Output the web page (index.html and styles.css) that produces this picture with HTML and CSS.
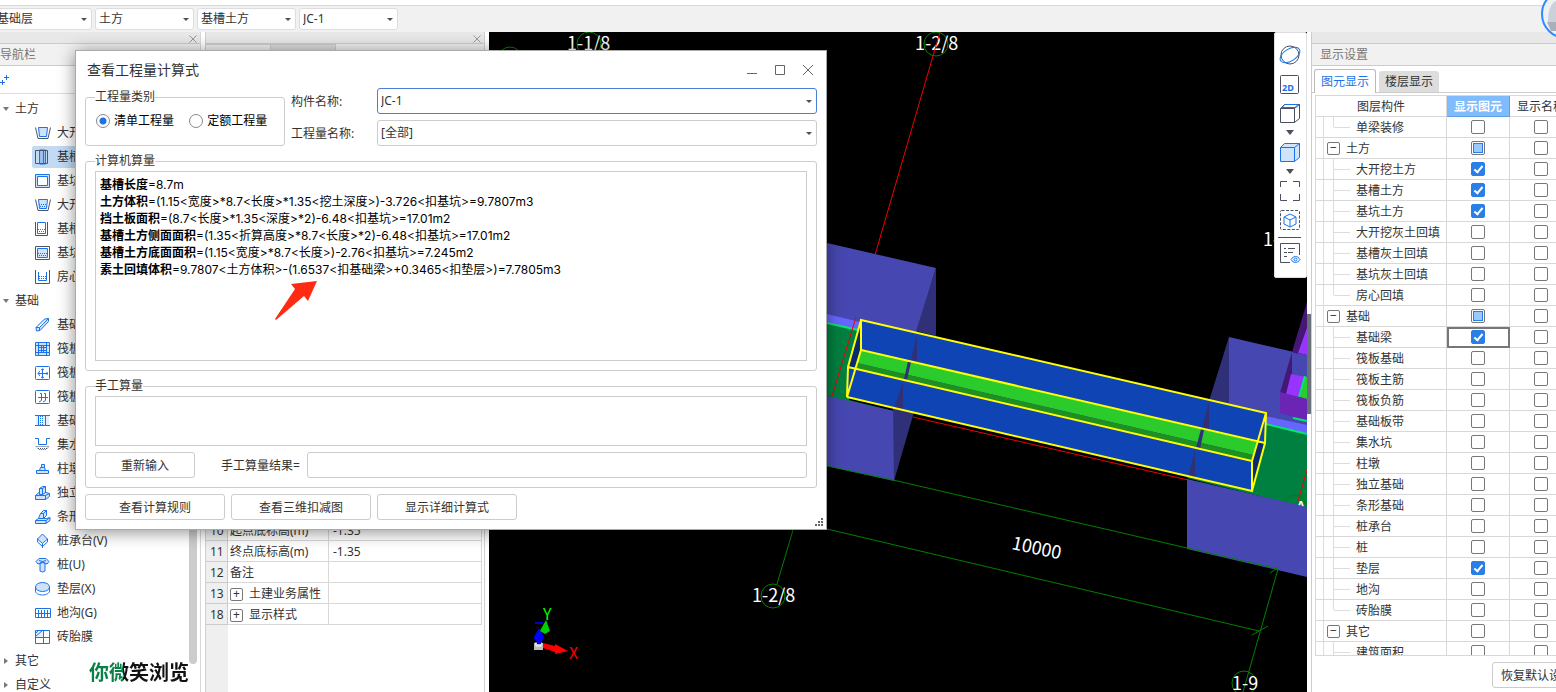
FILE: index.html
```html
<!DOCTYPE html>
<html lang="zh-CN">
<head>
<meta charset="UTF-8">
<meta name="viewport" content="width=device-width, initial-scale=1.0">
<title>查看工程量计算式</title>
<link rel="stylesheet" href="styles.css">
</head>
<body>
<header class="toolbar">
<span class="combo"><select aria-label="楼层"><option>基础层</option></select></span>
<span class="combo"><select aria-label="构件类别"><option>土方</option></select></span>
<span class="combo"><select aria-label="构件类型"><option>基槽土方</option></select></span>
<span class="combo"><select aria-label="构件"><option>JC-1</option></select></span>
<svg class="avatar" viewBox="0 0 15 38" aria-hidden="true"><circle cx="25" cy="14" r="24" fill="#eef0f4" stroke="#2a8cff" stroke-width="2"/><path d="M7 22c0-12 3-19 8-21v21z" fill="#ccd0d8"/><path d="M6 22h9v9H10z" fill="#a9b0bb"/></svg>
</header>

<main class="workspace">
<!-- Navigation -->
<nav class="panel nav">
<div class="panel-bar"><button class="close" aria-label="关闭导航栏"><svg viewBox="0 0 8 8"><path d="M.5.5l7 7M7.500.5l-7 7"/></svg></button></div>
<h2 class="panel-title nav-title">导航栏</h2>
<div class="nav-tools"><svg class="plus" viewBox="0 0 10 12"><path d="M4 3.500h5M6.500 1v5M0 8.500h5M2.500 6v5"/></svg></div>
<div class="tree">
<div class="group open">土方</div>
<a class="item" href="#"><svg viewBox="0 0 16 16"><path class="g" d="M.5 2.500L3 13.500h10l2.500-11"/><path class="f" d="M3.500 2.500h9l-1 9h-7z"/></svg>大开挖土方</a>
<a class="item selected" href="#"><svg viewBox="0 0 16 16"><path class="f" d="M4.500 1h6v14h-6z"/><path class="g" d="M.5 1.500h12v13H.5z"/><path d="M4.500 1.500v13M8.500 1.500v13"/></svg>基槽土方</a>
<a class="item" href="#"><svg viewBox="0 0 16 16"><path class="f" d="M.5 1.500h14v13H.5z"/><path class="w" d="M2.500 3.500h10v9h-10z"/></svg>基坑土方</a>
<a class="item" href="#"><svg viewBox="0 0 16 16"><path class="g" d="M.5 2.500L3 13.500h10l2.500-11"/><path class="f" d="M3.500 2.500h9l-1 9h-7z"/><path class="dots" d="M4 7.500h8M5 9.500h7M5 11.500h6"/></svg>大开挖灰土回填</a>
<a class="item" href="#"><svg viewBox="0 0 16 16"><path d="M2.500 1.500h8v11h-8z"/><path class="g" d="M.5 1v13.500h12V1"/><path class="dots" d="M3 8.500h7M4 10.500h7M3 12.500h7"/></svg>基槽灰土回填</a>
<a class="item" href="#"><svg viewBox="0 0 16 16"><path class="g" d="M.5 1.500h14v13H.5z"/><path class="f" d="M2.500 3.500h10v9h-10z"/><path class="dots" d="M3 8.500h9M4 10.500h8M3 12.500h9"/></svg>基坑灰土回填</a>
<a class="item" href="#"><svg viewBox="0 0 16 16"><path class="g" d="M.5 1v13.500h14V1"/><path d="M3.500 3v8.500h8V3"/><path class="dots" d="M4 7.500h8M4 9.500h8"/></svg>房心回填</a>
<div class="group open">基础</div>
<a class="item" href="#"><svg viewBox="0 0 16 16"><path class="f" d="M1 10.500L9.500 2l4-.500v3L5 13.500l-3.500.5zM1 10.500h3.500L13.500 1.500M4.500 10.500v3"/></svg>基础梁</a>
<a class="item" href="#"><svg viewBox="0 0 16 16"><path class="f" d="M.5 1.500h14v13H.5z"/><path d="M3.500 1v14M6.500 4v8M8.500 4v8M11.500 1v14M0 4.500h15M3 6.500h9M3 9.500h9M0 11.500h15"/></svg>筏板基础</a>
<a class="item" href="#"><svg viewBox="0 0 16 16"><rect x=".5" y="1.500" width="14" height="13" rx="1"/><path d="M3 8.500h10M7.500 4v9M5 6L3 8.500 5 11M9 4.500L7.500 4 6 5M6 12l1.500 1L9 12M12 7v3"/></svg>筏板主筋</a>
<a class="item" href="#"><svg viewBox="0 0 16 16"><rect x=".5" y="1.500" width="14" height="13" rx="1"/><path d="M3 8.500h10M5 4.500h1.500v7L4 13M9 4.500h1.500v7L8 13"/></svg>筏板负筋</a>
<a class="item" href="#"><svg viewBox="0 0 16 16"><path class="bg" d="M1 3h13v9H1z"/><path d="M0 2.500h15M0 12.500h15M3.500 3v9M10.500 3v9"/><path class="dots" d="M7.500 3v9M5.500 3v9"/></svg>基础板带</a>
<a class="item" href="#"><svg viewBox="0 0 16 16"><path d="M0 1.500h3.500v6h8v-6H15"/><path class="g dots" d="M1 9.500l3 3h7l3-3zM3 11.500h9"/></svg>集水坑</a>
<a class="item" href="#"><svg viewBox="0 0 16 16"><path class="f" d="M1.500 9.500h12v3h-12zM4.500 9.500l1-3h4l1 3zM6.500 3.500h3v3h-3z"/></svg>柱墩</a>
<a class="item" href="#"><svg viewBox="0 0 16 16"><path class="f" d="M.5 10.500L4 7.500h7l3.500 1v3l-4 3H.5z"/><path d="M.5 10.500h10v4M10.500 10.500l4-2"/><path class="f" d="M4.500 9.500v-6l3-2h3v6l-3 2z"/><path d="M7.500 9.500v-6h-3M7.500 3.500l3-2"/></svg>独立基础</a>
<a class="item" href="#"><svg viewBox="0 0 16 16"><path class="f" d="M.5 11.500l3-2h8l3.500-1v3l-4 3H.5z"/><path d="M.5 11.500H11v3M11 11.500l4-3"/><path class="f" d="M3.500 9.500l2-5 3-3h3v5l-3 3z"/><path d="M8.500 9.500v-5h-3M8.500 4.500l3-3"/></svg>条形基础</a>
<a class="item" href="#"><svg viewBox="0 0 16 16"><path class="f" d="M7.500 1l5 5-5 4.500-5-4.500z"/><path d="M2.500 6v3l5 4.500 5-4.500V6M7.500 10.500V15"/></svg>桩承台(V)</a>
<a class="item" href="#"><svg viewBox="0 0 16 16"><path class="f" d="M1 4.500l3-3h7l3 3-2 2.500-4-1.500-5 1.500zM5 6v8l2.500 1 2.500-1V6L7.500 5z"/><path d="M4 3.500l3.500 1 3.500-1"/></svg>桩(U)</a>
<a class="item" href="#"><svg viewBox="0 0 16 16"><path class="w" d="M.5 6v4c0 2.200 3.100 4 7 4s7-1.800 7-4V6"/><ellipse class="f" cx="7.500" cy="6" rx="7" ry="4.500"/></svg>垫层(X)</a>
<a class="item" href="#"><svg viewBox="0 0 16 16"><path d="M.5 3.500h15v9H.5zM1 8.500h14M3.500 5v7M6.500 5v7M9.500 5v7M12.500 5v7"/></svg>地沟(G)</a>
<a class="item" href="#"><svg viewBox="0 0 16 16"><path class="bg" d="M1 1h7v7H1z"/><path d="M.5 1.500h14v13H.5zM8.500 1v14M.5 8.500h14M1 7l7-6M1 4l3-3"/></svg>砖胎膜</a>
<div class="group">其它</div>
<div class="group">自定义</div>
</div>
<div class="scrollbar"></div>
<p class="caption">你微笑浏览</p>
</nav>

<!-- Properties -->
<section class="panel props">
<div class="panel-bar"><button class="close" aria-label="关闭属性"><svg viewBox="0 0 8 8"><path d="M.5.5l7 7M7.500.5l-7 7"/></svg></button></div>
<div class="props-tabs"><span></span><span class="dim"></span></div>
<div class="props-body">
<table class="props-table">
<tr><th>10</th><td>起点底标高(m)</td><td>-1.35</td></tr>
<tr><th>11</th><td>终点底标高(m)</td><td>-1.35</td></tr>
<tr><th>12</th><td>备注</td><td></td></tr>
<tr><th>13</th><td><button class="toggle" aria-label="展开">+</button>土建业务属性</td><td></td></tr>
<tr><th>18</th><td><button class="toggle" aria-label="展开">+</button>显示样式</td><td></td></tr>
</table>
</div>
</section>

<!-- 3D view -->
<section class="view">
<svg class="scene" viewBox="489 32 818 660" preserveAspectRatio="xMinYMin slice">
<g class="axis">
<circle cx="589" cy="44" r="12"/><circle cx="936" cy="44" r="12"/><circle cx="510" cy="59" r="12"/><circle cx="773" cy="596" r="12"/>
<path d="M793 530l-16 54"/>
</g>
<g class="label">
<text x="567" y="50">1-1/8</text><text x="915" y="50">1-2/8</text><text x="752" y="602">1-2/8</text><text x="1263" y="246">1-3</text>
<text transform="translate(1011 549) rotate(12)">10000</text>
</g>
<path class="red" d="M940 32L875 255"/>
<!-- left pit -->
<path fill="#4747b2" d="M827 243l109 25-20 67-89-10z"/>
<path fill="#303078" d="M936 268v68l-20-5z"/>
<path fill="#66f" d="M827 314l33 8-2 8-31-7z"/>
<path fill="#008040" d="M827 323l32 7-10 70 44 11v5l-66-20z"/>
<path stroke="#00e673" stroke-width="2" d="M827 323l31 7"/>
<path class="red" d="M856 317l-24 79"/>
<path fill="#4747b2" d="M827 396l67 15v70l-67-15z"/>
<path fill="#303078" d="M893 407l21 5-20 69z"/>
<!-- right pit -->
<path fill="#4747b2" d="M1229 337l78 18v75l-78-20z"/>
<path fill="#303078" d="M1229 337v70l-20-6z"/>
<path fill="#451777" d="M1307 302v24l-9 28-6-2z"/>
<path fill="#93f" d="M1307 327v28l-9-2z"/>
<path fill="#451777" d="M1292 352v23l-6 20-6-2z"/>
<path fill="#93f" d="M1291 374l15 3-6 21-14-4z"/>
<path fill="#2acb2a" d="M1307 377v22l-7-2 5-20z"/>
<path stroke="#00e673" stroke-width="2" d="M1305 376l-6 21"/>
<path fill="#6b24b3" d="M1280 392l27 7v21l-27-7z"/>
<path fill="#66f" d="M1265 416l42 9v9l-42-10z"/>
<path fill="#008040" d="M1265 424l42 10v74l-120-30z"/>
<path stroke="#00e673" stroke-width="2" d="M1266 424l41 10M1293 418l14 3"/>
<circle class="axis" cx="1295" cy="506" r="11"/>
<text class="tiny" x="1297" y="509">A</text>
<text class="tiny" x="1281" y="510">"</text>
<path class="red" d="M1307 470l-10 34M913 417l275 63"/>
<path fill="#4747b2" d="M1187 479l120 28v70l-120-28z"/>
<!-- trench -->
<path fill="#0f44b4" d="M861 320l405 93-1 30-13 48-405-94 1-30z"/>
<path fill="#303078" d="M917 335l-6 25 6 1zM903 382l-9 26 9 3zM1209 402l-7 26 7 2zM1195 450l-7 27 7 2z"/>
<path fill="#0a2a72" d="M861 322v29l-6 18-6-2zM1257 443h8l-12 46v-27z"/>
<path fill="#2acb2a" d="M861 350l396 92-4 13-396-92z"/>
<path fill="#1f8f1f" d="M857 363l396 92-2 6-395-92z"/>
<path fill="#303078" d="M908 361l3 1-4 18-3-1zM1201 429l3 1-4 19-4-1z"/>
<path class="yellow" d="M861 320l405 93-1 30-404-93zM861 320l-13 47-1 30 14-47M848 367l404 94v30L847 397M1266 413l-14 48M1265 443l-13 48"/>
<g class="axis">
<path d="M827 466l66 14 385 89M827 529l432 102M1278 569l-35 123M1270 573l9-6M1252 635l16-9"/>
<circle cx="1244" cy="683" r="12"/>
</g>
<text class="label" x="1232" y="690">1-9</text>
<!-- orientation marker -->
<path fill="#bbb" d="M534 643h9v7h-9z"/><path stroke="#fff" fill="none" d="M536 642v4h5v-4"/>
<path fill="#00c" d="M535 622h8v2h-8z"/><path fill="#00f" d="M539 628l5 9c0 3-3 3-3 7h-4c0-4-3-3-3-7z"/>
<path fill="#00d000" d="M546 620l4 11-5 3-5-3z"/>
<path fill="#f00" d="M543 643l12 3v-2l13 7-13 3v-2l-12-4z"/>
<text class="mark" fill="#0f0" x="543" y="620">Y</text><text class="mark" fill="#f00" x="569" y="659">X</text>
</svg>
<div class="view-tools">
<button aria-label="动态观察"><svg viewBox="0 0 22 22"><circle cx="11" cy="11" r="9"/><ellipse class="b" cx="11" cy="11" rx="11" ry="6" transform="rotate(-32 11 11)"/></svg></button>
<button aria-label="二维"><svg viewBox="0 0 22 22"><rect x="1.500" y="2.500" width="18" height="18" rx="1"/><text x="3" y="18">2D</text></svg></button>
<button aria-label="俯视"><svg viewBox="0 0 22 22"><path d="M1.500 6.500h14v14h-14zM1.500 6.500l4-4h15v14l-5 4M15.500 6.500l5-4"/><path class="b" d="M3 5.500l3-3h13l-3 3z"/></svg></button>
<i class="caret"></i>
<button aria-label="实体"><svg class="solid" viewBox="0 0 22 22"><path d="M1.500 6.500l4-4h15v14l-5 4h-14zM1.500 6.500h14v14M15.500 6.500l5-4"/></svg></button>
<i class="caret"></i>
<button aria-label="全屏"><svg viewBox="0 0 22 22"><path d="M1.500 7V1.500H8M14 1.500h6.500V7M20.500 14v6.500H14M8 20.500H1.500V14"/></svg></button>
<button aria-label="局部三维"><svg viewBox="0 0 22 22"><rect x="1.500" y="1.500" width="19" height="19" rx="1" stroke-dasharray="3 1.500"/><path class="b" d="M11 5l6 3v7l-6 3-6-3V8zM5 8l6 3 6-3M11 11v7"/></svg></button>
<hr>
<button aria-label="显示设置"><svg viewBox="0 0 22 22"><path d="M11 20.500H1.500v-19h19V13M5 6.500h2M9 6.500h7M5 10.500h3M9 10.500h5M5 14.500h3"/><path class="b" d="M12 17.500c2.500-4 6.500-4 9 0-2.500 4-6.500 4-9 0z"/><circle class="b" cx="16.500" cy="17.500" r="1.500"/></svg></button>
</div>
</section>
<div class="splitter"><i></i></div>

<!-- Display settings -->
<section class="panel settings">
<div class="panel-bar"></div>
<h2 class="panel-title">显示设置</h2>
<div class="tabs"><button class="tab active">图元显示</button><button class="tab">楼层显示</button></div>
<div class="layers">
<table class="layer-table">
<thead><tr><th>图层构件</th><th class="current">显示图元</th><th>显示名称</th></tr></thead>
<tbody id="layerRows"></tbody>
</table>
</div>
<div class="settings-foot"><button class="btn">恢复默认设置</button></div>
</section>
</main>

<!-- Formula dialog -->
<div class="dialog" role="dialog" aria-labelledby="dialogTitle">
<div class="dialog-head">
<h1 id="dialogTitle">查看工程量计算式</h1>
<button aria-label="最小化"><svg viewBox="0 0 12 12"><path d="M1 9.500h10"/></svg></button>
<button aria-label="最大化"><svg viewBox="0 0 12 12"><path d="M1.500 1.500h9v9h-9z"/></svg></button>
<button aria-label="关闭"><svg viewBox="0 0 12 12"><path d="M1 1l10 10M11 1L1 11"/></svg></button>
</div>
<div class="dialog-body">
<div class="filters">
<fieldset class="kind">
<legend>工程量类别</legend>
<label><input type="radio" name="kind" checked>清单工程量</label>
<label><input type="radio" name="kind">定额工程量</label>
</fieldset>
<div class="fields">
<label for="member">构件名称:</label>
<span class="combo active"><select id="member"><option>JC-1</option></select></span>
<label for="quantity">工程量名称:</label>
<span class="combo"><select id="quantity"><option>[全部]</option></select></span>
</div>
</div>
<fieldset>
<legend>计算机算量</legend>
<div class="formulas">
<p><b>基槽长度</b>=8.7m</p>
<p><b>土方体积</b>=(1.15&lt;宽度&gt;*8.7&lt;长度&gt;*1.35&lt;挖土深度&gt;)-3.726&lt;扣基坑&gt;=9.7807m3</p>
<p><b>挡土板面积</b>=(8.7&lt;长度&gt;*1.35&lt;深度&gt;*2)-6.48&lt;扣基坑&gt;=17.01m2</p>
<p><b>基槽土方侧面面积</b>=(1.35&lt;折算高度&gt;*8.7&lt;长度&gt;*2)-6.48&lt;扣基坑&gt;=17.01m2</p>
<p><b>基槽土方底面面积</b>=(1.15&lt;宽度&gt;*8.7&lt;长度&gt;)-2.76&lt;扣基坑&gt;=7.245m2</p>
<p><b>素土回填体积</b>=9.7807&lt;土方体积&gt;-(1.6537&lt;扣基础梁&gt;+0.3465&lt;扣垫层&gt;)=7.7805m3</p>
<svg class="arrow" viewBox="0 0 44 42"><path fill="#ff2a12" d="M43 1l-9 20-4-5L2 40l-1-1L21 9l-4-5z"/></svg>
</div>
</fieldset>
<fieldset class="manual">
<legend>手工算量</legend>
<textarea aria-label="手工算量"></textarea>
<div class="result">
<button class="btn">重新输入</button>
<label for="result">手工算量结果=</label>
<input type="text" id="result">
</div>
</fieldset>
<div class="actions">
<button class="btn">查看计算规则</button>
<button class="btn">查看三维扣减图</button>
<button class="btn">显示详细计算式</button>
</div>
</div>
<svg class="grip" viewBox="0 0 8 8"><path d="M6 0h2v2H6zM6 3h2v2H6zM6 6h2v2H6zM3 3h2v2H3zM3 6h2v2H3zM0 6h2v2H0z"/></svg>
</div>
<script src="script.js"></script>
</body>
</html>
```
FILE: styles.css
```css
* {
box-sizing: border-box;
}
body {
margin: 0;
height: 100vh;
overflow: hidden;
display: flex;
flex-direction: column;
position: relative;
background: #fff;
color: #333;
font: 12px/18px "Noto Sans", "Noto Sans CJK SC", sans-serif;
}
button, input, select, textarea {
font: inherit;
color: inherit;
margin: 0;
}
h1, h2, p {
margin: 0;
font-weight: normal;
}
svg {
display: block;
fill: none;
}
table {
border-collapse: separate;
border-spacing: 0;
table-layout: fixed;
}

/* Toolbar */
.toolbar {
position: relative;
flex: none;
display: flex;
gap: 3px;
height: 27px;
margin-top: 5px;
padding: 2px 0 0;
border-top: 1px solid #d8d8d8;
background: #f1f1f1;
}
.toolbar .combo {
width: 99px;
height: 22px;
}
.toolbar .combo:first-child {
margin-left: -7px;
}
.avatar {
position: absolute;
top: -6px;
right: 0;
width: 15px;
height: 38px;
z-index: 2;
}
.combo {
position: relative;
display: block;
}
.combo select {
appearance: none;
display: block;
width: 100%;
height: 100%;
padding: 0 3px;
border: 1px solid #ccc;
border-radius: 3px;
background: #fff;
}
.toolbar select {
border-color: #ddd;
}
.combo::after {
content: "";
position: absolute;
right: 5px;
top: 50%;
margin-top: -1px;
border: 3px solid transparent;
border-top-color: #4a5060;
border-bottom: 0;
}
.combo.active select {
border-color: #4a7fd6;
}

/* Panels */
.workspace {
flex: 1;
min-height: 0;
display: flex;
}
.panel {
flex: none;
overflow: hidden;
display: flex;
flex-direction: column;
}
.panel-bar {
flex: none;
height: 12px;
display: flex;
justify-content: flex-end;
border-bottom: 1px solid #ccc;
background: #e8e8e8;
}
.close {
width: 15px;
padding: 2px 3px 0 4px;
border: 0;
background: none;
}
.close svg {
width: 8px;
height: 8px;
stroke: #999;
}
.panel-title {
flex: none;
height: 22px;
padding-left: 8px;
border-bottom: 1px solid #ccc;
background: #f1f1f1;
color: #777;
font-size: 12px;
line-height: 22px;
}

/* Navigation */
.nav {
position: relative;
width: 201px;
border-right: 1px solid #d8d8d8;
}
.nav-title {
padding-left: 0;
}
.nav-tools {
flex: none;
height: 28px;
padding-top: 8px;
border-bottom: 1px solid #ddd;
}
.plus {
width: 10px;
height: 12px;
stroke: #1a6fe0;
}
.tree {
display: flex;
flex-direction: column;
padding-top: 3px;
}
.group, .item {
flex: none;
display: flex;
align-items: center;
height: 24px;
}
.group::before {
content: "";
margin: 0 7px 0 4px;
border: 3px solid transparent;
border-left: 4px solid #777;
border-right: 0;
}
.group.open::before {
margin: 0 6px 0 3px;
border: 3px solid transparent;
border-top: 4px solid #777;
border-bottom: 0;
}
.item {
height: 22px;
margin: 1px 12px 1px 32px;
padding-left: 3px;
gap: 6px;
border-radius: 2px;
color: #333;
text-decoration: none;
}
.item.selected {
background: #c2daf3;
}
.item svg {
width: 16px;
height: 16px;
stroke: #1a73e8;
}
.item .g {
stroke: #4a5568;
}
.item .f {
fill: #cfe2fa;
}
.item .w {
fill: #fff;
}
.item .bg {
fill: #e3effc;
stroke: none;
}
.item .dots {
stroke-dasharray: 1 1;
}
.selected .f {
fill: #9dbfee;
}
.scrollbar {
position: absolute;
top: 62px;
bottom: 28px;
right: 3px;
width: 8px;
border-radius: 4px;
background: #ccc;
}
.caption {
position: absolute;
left: 89px;
bottom: 7px;
background: linear-gradient(90deg, #0a8048 34px, #111 34px);
background-clip: text;
color: transparent;
font: bold 20px/26px "Noto Sans CJK SC", sans-serif;
}

/* Properties */
.props {
width: 280px;
margin: 0 4px;
border: solid #d0d0d0;
border-width: 0 1px;
}
.props-tabs {
flex: none;
display: flex;
height: 24px;
background: #f1f1f1;
}
.props-tabs span {
width: 65px;
border: 1px solid #ccc;
border-left: 0;
}
.props-tabs .dim {
background: #ddd;
}
.props-body {
flex: 1;
padding-top: 452px;
background: linear-gradient(90deg, #efefef 22px, #fff 22px);
}
.props-table {
width: 276px;
}
.props-table th, .props-table td {
height: 21px;
padding: 2px 2px 0;
border: solid #d8d8d8;
border-width: 0 1px 1px 0;
line-height: 18px;
text-align: left;
white-space: nowrap;
}
.props-table th {
width: 22px;
padding: 2px 0 0 4px;
border-color: #ccc;
background: #efefef;
font-weight: normal;
}
.props-table td:nth-child(2) {
width: 101px;
}
.props-table td:last-child {
padding-left: 4px;
}
.toggle {
flex: none;
display: inline-block;
width: 13px;
height: 13px;
margin-right: 6px;
padding: 0;
border: 1px solid #777;
border-radius: 2px;
background: #fff;
line-height: 10px;
text-align: center;
}

/* 3D view */
.view {
position: relative;
flex: 1;
min-width: 0;
background: #000;
}
.scene {
width: 100%;
height: 100%;
}
.axis {
stroke: #008000;
}
.red {
stroke: #f00000;
}
.yellow {
stroke: #ff0;
stroke-width: 2;
}
.label {
fill: #fff;
font: 18px "Noto Sans CJK SC", sans-serif;
}
.tiny {
fill: #fff;
font: bold 11px "Noto Sans", sans-serif;
}
.mark {
font: 16px "Noto Sans CJK SC", sans-serif;
}
.view-tools {
position: absolute;
top: 0;
right: 0;
display: flex;
flex-direction: column;
align-items: center;
width: 33px;
height: 246px;
padding: 11px 2px 0 0;
border: 1px solid #ddd;
border-radius: 2px;
background: #fff;
}
.view-tools button {
height: 22px;
margin-bottom: 7px;
padding: 0;
border: 0;
background: none;
}
.view-tools svg {
width: 22px;
height: 22px;
stroke: #4a5060;
}
.view-tools .b, .view-tools .solid {
stroke: #1a73e8;
}
.view-tools .solid {
fill: #d0e3fa;
}
.view-tools text {
fill: #1a73e8;
stroke: none;
font: bold 9px "Noto Sans", sans-serif;
}
.view-tools hr {
width: 23px;
margin: -1px 0 4px;
border: 0;
border-top: 1px solid #4a5060;
}
.caret {
margin: -1px 0 6px;
border: 4px solid transparent;
border-top: 5px solid #4a5060;
border-bottom: 0;
}
.splitter {
flex: none;
display: flex;
flex-direction: column;
justify-content: center;
width: 4px;
padding-top: 4px;
}
.splitter i {
height: 100px;
background: #6a6f7c;
}

/* Display settings */
.settings {
width: 245px;
border-left: 1px solid #ccc;
}
.tabs {
flex: none;
display: flex;
align-items: flex-end;
gap: 3px;
height: 27px;
padding: 0 0 0 2px;
border-bottom: 1px solid #ccc;
}
.tab {
width: 60px;
height: 21px;
padding: 0;
border: 0;
border-radius: 3px 3px 0 0;
background: #ddd;
}
.tab.active {
width: 62px;
height: 24px;
margin-bottom: -1px;
border: 1px solid #bbb;
border-bottom: 0;
background: #fff;
color: #1a73e8;
}
.layers {
flex: 1;
min-height: 0;
margin: 2px 0 0 3px;
overflow: hidden;
border: solid #d8d8d8;
border-width: 1px 0 1px 1px;
}
.layer-table {
width: 257px;
}
.layer-table th, .layer-table td {
height: 21px;
padding: 0;
border: solid #d8d8d8;
border-width: 0 1px 1px 0;
width: 63px;
text-align: center;
font-weight: normal;
line-height: 18px;
}
.layer-table th {
padding-top: 2px;
}
.layer-table th:first-child {
width: 131px;
}
.layer-table .current {
border-color: #5e9fe8;
background: #80bbfb;
color: #fff;
font-weight: bold;
}
.layer-table .focus {
outline: 2px solid #777;
outline-offset: -2px;
}
.node {
display: flex;
align-items: center;
height: 20px;
white-space: nowrap;
}
.node::before {
content: "";
width: 7px;
height: 20px;
margin-right: 3px;
border-right: 1px solid #ddd;
}
.name {
padding-top: 2px;
}
.elbow {
width: 17px;
height: 20px;
margin: 0 6px;
border-left: 1px solid #ddd;
}
.elbow::before {
content: "";
display: block;
height: 10px;
border-bottom: 1px solid #ddd;
}
.last .elbow {
height: 10px;
margin-bottom: 10px;
}
.layer-table input {
appearance: none;
display: block;
width: 14px;
height: 14px;
margin: 0 auto;
border: 1px solid #777;
border-radius: 2px;
background: #fff;
}
.layer-table input:checked {
border-color: #2a7fe6;
background: #2a7fe6;
}
.layer-table input:checked::after {
content: "";
display: block;
width: 3px;
height: 7px;
margin: 1px 0 0 4px;
border: solid #fff;
border-width: 0 2px 2px 0;
transform: rotate(40deg);
}
.layer-table input:indeterminate {
padding: 1px;
}
.layer-table input:indeterminate::after {
content: "";
display: block;
height: 8px;
border: 1px solid #2a7fe6;
background: #99c8ff;
}
.settings-foot {
flex: none;
padding: 6px 0 4px 180px;
}
.btn {
height: 26px;
padding: 2px 8px 0;
border: 1px solid #ccc;
border-radius: 3px;
background: #fff;
white-space: nowrap;
}

/* Formula dialog */
.dialog {
position: absolute;
left: 75px;
top: 50px;
width: 752px;
z-index: 3;
border: 1px solid #aaa;
background: #fff;
box-shadow: 0 2px 16px rgba(0, 0, 0, .45);
}
.dialog-head {
display: flex;
align-items: center;
gap: 16px;
height: 37px;
padding: 0 12px 0 11px;
}
.dialog-head h1 {
flex: 1;
font-size: 14px;
}
.dialog-head button {
width: 12px;
padding: 0;
border: 0;
background: none;
}
.dialog-head svg {
width: 12px;
height: 12px;
stroke: #666;
}
.dialog-body {
display: flex;
flex-direction: column;
gap: 6px;
padding: 0 9px 9px;
}
fieldset {
min-width: 0;
margin: 0;
padding: 1px 9px 9px;
border: 1px solid #ccc;
border-radius: 3px;
}
legend {
padding: 0;
}
.filters {
display: flex;
gap: 6px;
}
.kind {
width: 200px;
padding-top: 6px;
color: #000;
}
.kind legend {
color: #333;
}
.kind label {
display: inline-flex;
align-items: center;
gap: 4px;
margin-right: 11px;
}
.kind label + label {
margin-right: 0;
}
.kind input {
appearance: none;
width: 14px;
height: 14px;
margin-left: 1px;
border: 1px solid #888;
border-radius: 50%;
}
.kind input:checked {
background: radial-gradient(circle, #1a73e8 3px, #fff 4px);
}
.fields {
flex: 1;
display: grid;
grid-template-columns: 80px 1fr;
gap: 6px;
align-items: center;
}
.fields label, .result label {
padding-top: 2px;
}
.fields .combo {
height: 26px;
}
.formulas {
position: relative;
height: 190px;
padding: 4px;
border: 1px solid #ccc;
color: #000;
font-family: Inter, "Noto Sans CJK SC", sans-serif;
line-height: 17px;
white-space: nowrap;
}
.arrow {
position: absolute;
left: 178px;
top: 108px;
width: 44px;
height: 42px;
}
textarea {
display: block;
width: 100%;
height: 50px;
border: 1px solid #ccc;
resize: none;
}
.result {
display: flex;
align-items: center;
margin-top: 6px;
}
.result .btn {
width: 100px;
margin-right: 26px;
}
.result input {
flex: 1;
height: 26px;
margin-left: 7px;
border: 1px solid #ccc;
border-radius: 3px;
}
.actions {
display: flex;
gap: 6px;
}
.actions .btn {
width: 140px;
}
.grip {
position: absolute;
right: 3px;
bottom: 3px;
width: 8px;
height: 8px;
fill: #666;
}
```
FILE: script.js
```js
// g: group row, on: shown, part: partly shown, last: last row of its group
const layers = [
{ name: '单梁装修', last: true },
{ name: '土方', g: true, part: true },
{ name: '大开挖土方', on: true },
{ name: '基槽土方', on: true },
{ name: '基坑土方', on: true },
{ name: '大开挖灰土回填' },
{ name: '基槽灰土回填' },
{ name: '基坑灰土回填' },
{ name: '房心回填', last: true },
{ name: '基础', g: true, part: true },
{ name: '基础梁', on: true, focus: true },
{ name: '筏板基础' },
{ name: '筏板主筋' },
{ name: '筏板负筋' },
{ name: '基础板带' },
{ name: '集水坑' },
{ name: '柱墩' },
{ name: '独立基础' },
{ name: '条形基础' },
{ name: '桩承台' },
{ name: '桩' },
{ name: '垫层', on: true },
{ name: '地沟' },
{ name: '砖胎膜', last: true },
{ name: '其它', g: true },
{ name: '建筑面积' }
];

document.getElementById('layerRows').innerHTML = layers.map(row => `
<tr>
<td><div class="node ${row.last ? 'last' : ''}">${row.g ? '<button class="toggle" aria-label="折叠">−</button>' : '<span class="elbow"></span>'}<span class="name">${row.name}</span></div></td>
<td class="${row.focus ? 'focus' : ''}"><input type="checkbox" aria-label="显示图元 ${row.name}" ${row.on ? 'checked' : ''} ${row.part ? 'data-part' : ''}></td>
<td><input type="checkbox" aria-label="显示名称 ${row.name}"></td>
</tr>
`).join('');

document.querySelectorAll('[data-part]').forEach(box => {
box.indeterminate = true;
});
```
